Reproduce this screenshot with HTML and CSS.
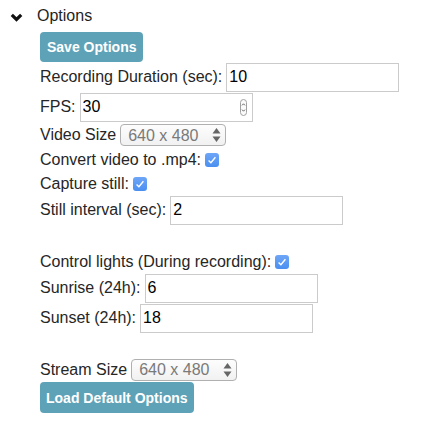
FILE: index.html
```html
<!DOCTYPE html>
<html>
<head>
<meta charset="utf-8">
<link rel="stylesheet" href="styles.css">
</head>
<body>
<div class="header">
  <svg class="chev" width="13" height="9" viewBox="0 0 13 9"><path d="M1.8 1.8 L6.5 6.4 L11.2 1.8" fill="none" stroke="#111" stroke-width="3.2"/></svg>
  <span class="title">Options</span>
</div>
<div class="section">
  <button class="btn btn-save">Save Options</button>
  <div class="field h30"><span>Recording Duration (sec):</span><input class="text" type="text" value="10"></div>
  <div class="field h30"><span>FPS:</span>
    <span class="num"><input type="text" value="30"><svg class="pill" width="7" height="17" viewBox="0 0 7 17"><rect x="0.5" y="0.5" width="6" height="16" rx="3" fill="#fbfbfb" stroke="#a0a0a0"/><path d="M2 6.4 L3.5 4.8 L5 6.4 M2 10.6 L3.5 12.2 L5 10.6" fill="none" stroke="#555" stroke-width="0.9"/></svg></span>
  </div>
  <div class="field h26"><span>Video Size</span>
    <span class="sel sel-video"><select><option>640 x 480</option></select><svg class="arrows" width="9" height="16" viewBox="0 0 9 16"><path d="M0.5 6.5 L4.5 1 L8.5 6.5 Z M0.5 9.5 L4.5 15 L8.5 9.5 Z" fill="#666"/></svg></span>
  </div>
  <div class="field h24"><span>Convert video to .mp4:</span><span class="check"><svg width="14" height="14" viewBox="0 0 14 14"><path d="M3.6 7.4 L5.9 9.7 L10.4 4.2" fill="none" stroke="#fff" stroke-width="1.4"/></svg></span></div>
  <div class="field h23"><span>Capture still:</span><span class="check"><svg width="14" height="14" viewBox="0 0 14 14"><path d="M3.6 7.4 L5.9 9.7 L10.4 4.2" fill="none" stroke="#fff" stroke-width="1.4"/></svg></span></div>
  <div class="field h30"><span>Still interval (sec):</span><input class="text" type="text" value="2"></div>
  <div class="spacer h25"></div>
  <div class="field h23"><span>Control lights (During recording):</span><span class="check"><svg width="14" height="14" viewBox="0 0 14 14"><path d="M3.6 7.4 L5.9 9.7 L10.4 4.2" fill="none" stroke="#fff" stroke-width="1.4"/></svg></span></div>
  <div class="field h30"><span>Sunrise (24h):</span><input class="text" type="text" value="6"></div>
  <div class="field h30"><span>Sunset (24h):</span><input class="text" type="text" value="18"></div>
  <div class="spacer h24"></div>
  <div class="field h25"><span>Stream Size</span>
    <span class="sel sel-stream"><select><option>640 x 480</option></select><svg class="arrows" width="9" height="16" viewBox="0 0 9 16"><path d="M0.5 6.5 L4.5 1 L8.5 6.5 Z M0.5 9.5 L4.5 15 L8.5 9.5 Z" fill="#666"/></svg></span>
  </div>
  <button class="btn btn-load">Load Default Options</button>
</div>
</body>
</html>
```

FILE: styles.css
```css
html, body {
  margin: 0;
  padding: 0;
  background: #fff;
}
body {
  font-family: "Liberation Sans", Arial, Helvetica, sans-serif;
  font-size: 16px;
  color: #262626;
}
.header {
  display: flex;
  align-items: center;
  height: 24px;
  margin-top: 4px;
  padding-left: 10px;
}
.chev {
  display: block;
  margin-right: 14px;
  margin-top: 3px;
}
.title {
  color: #1f1f1f;
}
.section {
  padding-left: 40px;
}
.btn {
  display: block;
  height: 30px;
  margin: 4px 0 0 0;
  padding: 0 7px;
  border: 0;
  border-radius: 4px;
  background: #5ea2b8;
  color: #fff;
  font-family: "Liberation Sans", Arial, Helvetica, sans-serif;
  font-weight: bold;
  font-size: 14px;
}
.btn-load {
  margin-top: 0;
  height: 31px;
  padding: 0 6px;
}
.field {
  display: flex;
  align-items: center;
  gap: 4px;
  white-space: pre;
}
.h30 { height: 30px; }
.h26 { height: 26px; }
.h25 { height: 25px; }
.h24 { height: 24px; }
.h23 { height: 23px; }
.spacer.h25 { height: 25px; }
.spacer.h24 { height: 24px; }
.text {
  box-sizing: border-box;
  width: 173px;
  height: 29px;
  margin: 0;
  padding: 0 2px;
  border: 1px solid #cbcbcb;
  border-radius: 0;
  font-family: "Liberation Sans", Arial, Helvetica, sans-serif;
  font-size: 16px;
  color: #000;
  outline: none;
}
.num {
  box-sizing: border-box;
  display: inline-flex;
  align-items: center;
  width: 173px;
  height: 29px;
  border: 1px solid #cbcbcb;
  padding-right: 5px;
}
.num input {
  flex: 1;
  min-width: 0;
  height: 100%;
  margin: 0;
  padding: 0 2px;
  border: 0;
  outline: none;
  font-family: "Liberation Sans", Arial, Helvetica, sans-serif;
  font-size: 16px;
  color: #000;
  background: transparent;
}
.pill {
  display: block;
}
.sel {
  box-sizing: border-box;
  display: inline-flex;
  align-items: center;
  height: 22px;
  border: 1px solid #b0b0b0;
  border-radius: 4px;
  background: linear-gradient(#fdfdfd, #f1f1f1);
  padding-right: 4px;
}
.sel-video { width: 106px; }
.sel-stream { width: 106px; }
.sel select {
  -webkit-appearance: none;
  appearance: none;
  flex: 1;
  min-width: 0;
  height: 100%;
  margin: 0;
  padding: 0 0 0 7px;
  border: 0;
  outline: none;
  background: transparent;
  font-family: "Liberation Sans", Arial, Helvetica, sans-serif;
  font-size: 16px;
  color: #7a7a7a;
}
.arrows {
  display: block;
}
.check {
  display: inline-block;
  width: 14px;
  height: 14px;
  border-radius: 3px;
  background: linear-gradient(#6ea6f7, #4a8ff0);
}
.check svg {
  display: block;
}
```
